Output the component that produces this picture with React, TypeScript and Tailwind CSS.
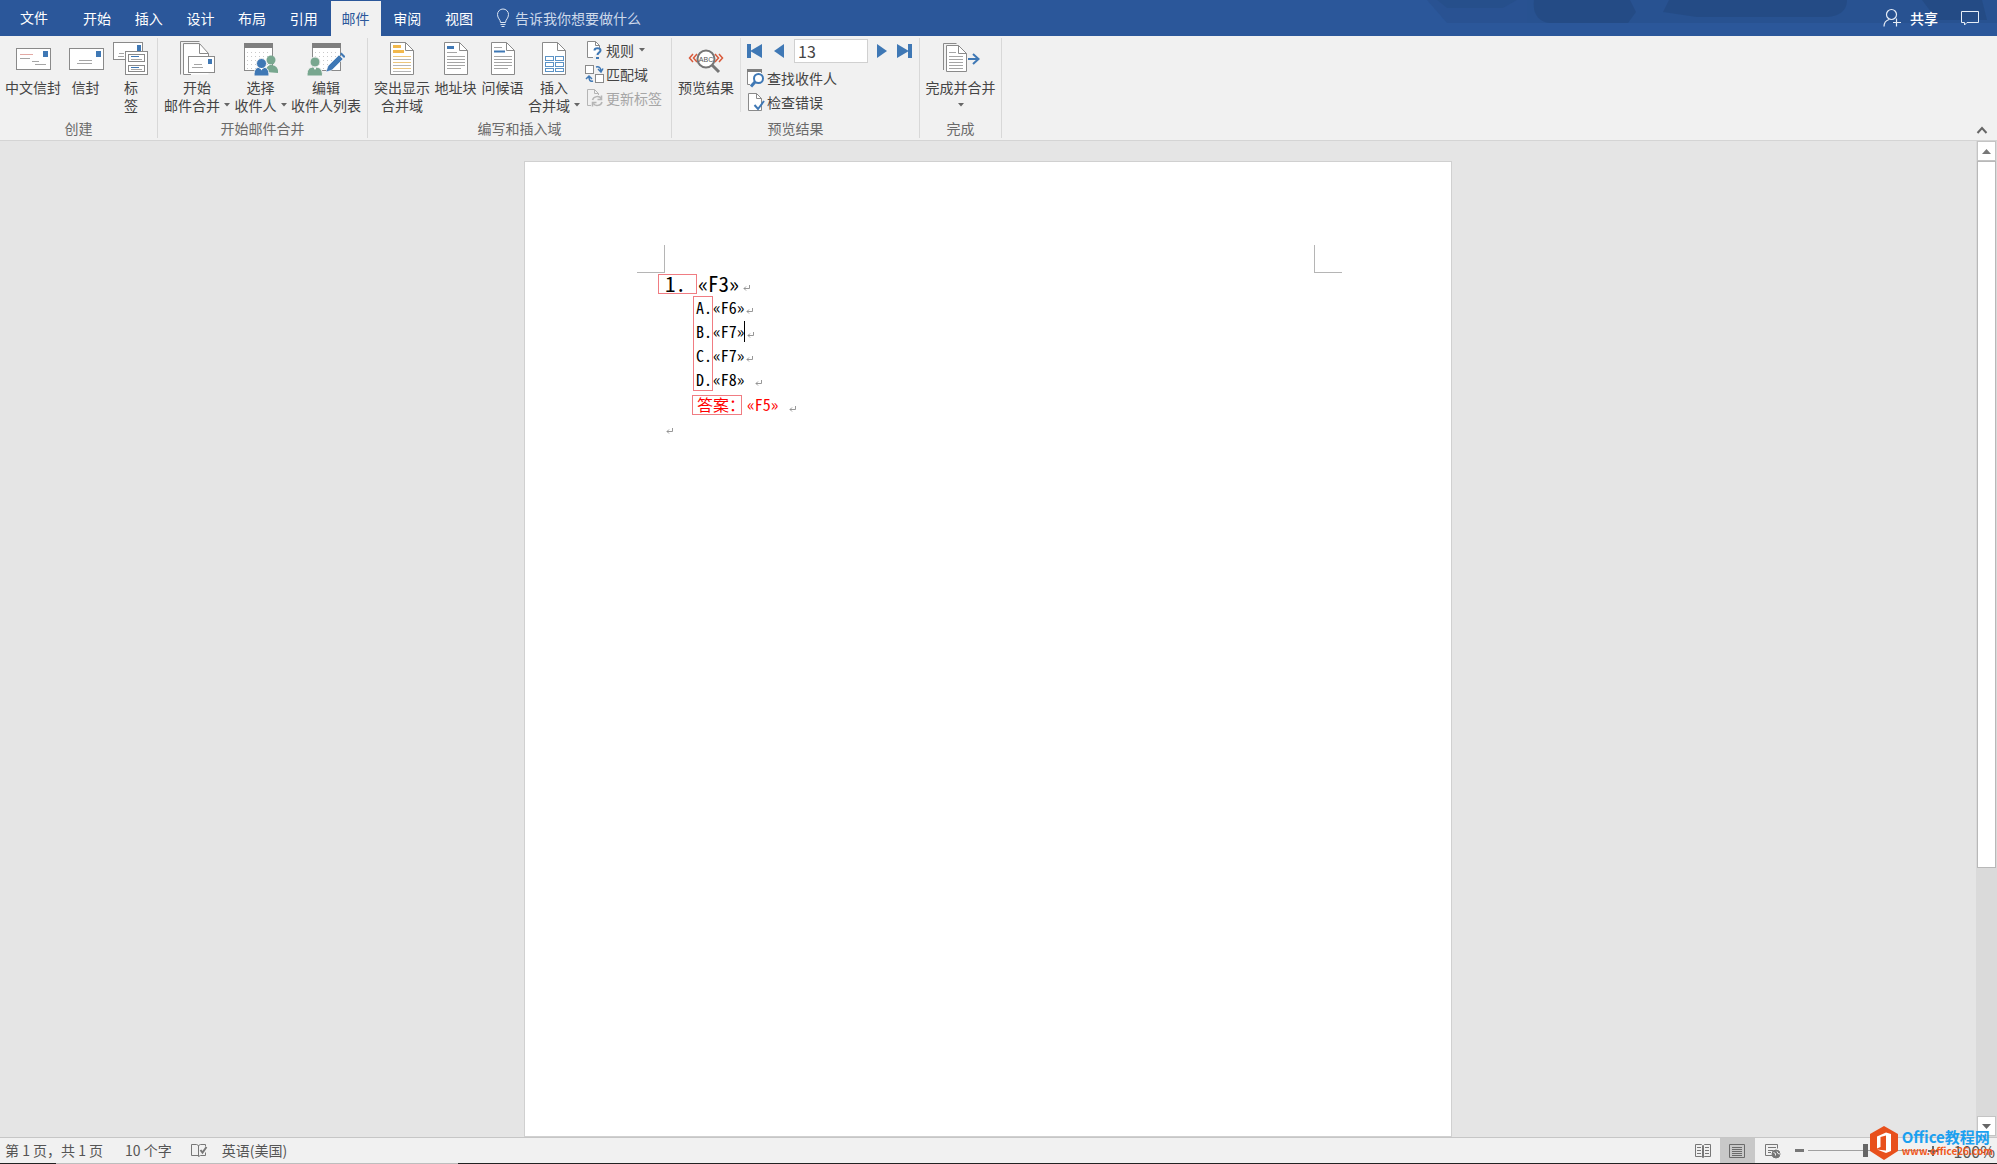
import React from 'react';

type IconProps = { className?: string };

const GRAY = '#8a8a8a';
const BLUE = '#3f78b5';

function EnvelopeCnIcon() {
  return (
    <svg width="36" height="34" viewBox="0 0 36 34" fill="none">
      <rect x="1.5" y="7.5" width="34" height="21" fill="#fff" stroke={GRAY} />
      <rect x="28" y="10" width="5" height="6" fill={BLUE} />
      <path d="M5 13.5h13" stroke="#e3a9a4" />
      <path d="M5 17.5h10M17 20.5h7M20 23.5h11" stroke="#a5a5a5" />
    </svg>
  );
}

function EnvelopeIcon() {
  return (
    <svg width="36" height="34" viewBox="0 0 36 34" fill="none">
      <rect x="1.5" y="7.5" width="34" height="21" fill="#fff" stroke={GRAY} />
      <rect x="28" y="10" width="5" height="6" fill={BLUE} />
      <path d="M11 19.5h13M9 22.5h15" stroke="#a5a5a5" />
    </svg>
  );
}

function LabelsIcon() {
  return (
    <svg width="36" height="34" viewBox="0 0 36 34" fill="none">
      <rect x="0.5" y="1.5" width="29" height="17" fill="#fff" stroke={GRAY} />
      <rect x="24" y="4" width="4" height="6" fill={BLUE} />
      <path d="M6 12.5h5M5 15.5h6" stroke="#a5a5a5" />
      <rect x="12.5" y="10.5" width="22" height="23" fill="#fff" stroke={GRAY} />
      <rect x="15.5" y="13.5" width="16" height="7" stroke={GRAY} />
      <rect x="15.5" y="24.5" width="16" height="6" stroke={GRAY} />
      <path d="M18 15.5h8M18 26.5h8" stroke={BLUE} />
      <path d="M18 18.5h11M18 28.5h11" stroke="#a5a5a5" />
    </svg>
  );
}

function StartMergeIcon() {
  return (
    <svg width="36" height="36" viewBox="0 0 36 36" fill="none">
      <path d="M1.5 34.5v-33h19" stroke={GRAY} />
      <path d="M4.5 34.5v-30h17l8 9v21z" fill="#fff" />
      <path d="M12 34.5H4.5v-31h16l9 10v3M20.5 4v9.5h9" stroke={GRAY} />
      <rect x="9.5" y="16.5" width="26" height="16" fill="#fff" stroke={GRAY} />
      <rect x="29" y="19" width="4" height="5" fill={BLUE} />
      <path d="M15 24.5h8M13 27.5h11" stroke="#a5a5a5" />
    </svg>
  );
}

function Calendar() {
  return (
    <>
      <rect x="1.5" y="3.5" width="28" height="27" fill="#fff" stroke={GRAY} />
      <rect x="1" y="3" width="29" height="5" fill="#7f7f7f" />
      <path
        d="M4 12.5h24M4 16.5h24M4 20.5h24M4 24.5h24M4 28.5h12"
        stroke="#c9c9c9"
        strokeDasharray="1 3"
      />
    </>
  );
}

function SelectRecipientsIcon() {
  return (
    <svg width="36" height="36" viewBox="0 0 36 36" fill="none">
      <Calendar />
      <circle cx="28" cy="20" r="4.5" fill="#78a78f" />
      <path d="M23 32c0-5 2-7 5-7s7 2 7 6v2z" fill="#78a78f" />
      <path d="M11 36c0-7 2-9 7.500-9s7.500 2 7.500 9z" fill={BLUE} stroke="#f1f1f1" />
      <circle cx="18.5" cy="23.5" r="5" fill={BLUE} stroke="#f1f1f1" />
      <path d="M17 28l1.5 2.5L20 28z" fill="#fff" />
    </svg>
  );
}

function EditRecipientsIcon() {
  return (
    <svg width="38" height="36" viewBox="0 0 38 36" fill="none">
      <g transform="translate(4 0)">
        <Calendar />
      </g>
      <path d="M0 36c0-7 2-9 7.500-9s8 2 8 9z" fill="#78a78f" stroke="#f1f1f1" />
      <circle cx="8" cy="22" r="5" fill="#78a78f" stroke="#f1f1f1" />
      <path d="M6.500 27.500L8 30l1.500-2.500z" fill="#fff" />
      <path d="M19 32l2-6 11-11 4 4-11 11z" fill={BLUE} stroke="#fff" strokeWidth="0.5" />
      <path d="M33 14l1.500-1.500 4 4L37 18z" fill={BLUE} />
    </svg>
  );
}

function Sheet({ children }: { children: React.ReactNode }) {
  return (
    <svg width="26" height="34" viewBox="0 0 26 34" fill="none">
      <path d="M1.5 1.5h15l8 8v24h-23z" fill="#fff" stroke={GRAY} />
      <path d="M16.5 1.5v8h8" stroke={GRAY} />
      {children}
    </svg>
  );
}

function HighlightIcon() {
  return (
    <Sheet>
      <path d="M4 5.5h8M4 10.5h11" stroke="#f2b84b" strokeWidth="3" />
      <path d="M4 15.5h18M4 21.5h18M4 27.5h18" stroke="#ecc67c" />
      <path d="M4 18.5h18M4 24.5h18M4 30.5h18" stroke="#b5b5b5" />
    </Sheet>
  );
}

function AddressIcon() {
  return (
    <Sheet>
      <path d="M4 6.5h7" stroke={BLUE} strokeWidth="3" />
      <path d="M4 11.5h10M4 15.5h18M4 18.5h18M4 21.5h18M4 24.5h18M4 27.5h14" stroke="#a5a5a5" />
    </Sheet>
  );
}

function GreetingIcon() {
  return (
    <Sheet>
      <path d="M4 10.5h11" stroke={BLUE} strokeWidth="2" />
      <path d="M4 6.5h8M4 15.5h18M4 18.5h18M4 21.5h18M4 24.5h18M4 27.5h14" stroke="#a5a5a5" />
    </Sheet>
  );
}

function InsertFieldIcon() {
  return (
    <Sheet>
      <g stroke="#5b93c6">
        <rect x="4.5" y="15.5" width="8" height="4" />
        <rect x="14.5" y="15.5" width="8" height="4" />
        <rect x="4.5" y="21.5" width="8" height="4" />
        <rect x="14.5" y="21.5" width="8" height="4" />
        <rect x="4.5" y="27.5" width="8" height="3" />
        <rect x="14.5" y="27.5" width="8" height="3" />
      </g>
    </Sheet>
  );
}

function RulesIcon() {
  return (
    <svg width="18" height="20" viewBox="0 0 18 20" fill="none">
      <path d="M8 17.5H2.5v-16h8l4 4V9" fill="#fff" stroke={GRAY} />
      <path d="M10.5 1.5v4h4" stroke={GRAY} />
      <path d="M9.5 10.5c0-3 6-3 6 0 0 2-3 2-3 4.5" stroke={BLUE} strokeWidth="2" />
      <rect x="11" y="17" width="3" height="2" fill={BLUE} />
    </svg>
  );
}

function MatchIcon() {
  return (
    <svg width="20" height="20" viewBox="0 0 20 20" fill="none">
      <rect x="0.5" y="1.5" width="8" height="8" fill="#fff" stroke={GRAY} />
      <rect x="10.5" y="10.5" width="8" height="8" fill="#fff" stroke={GRAY} />
      <path d="M11 3c3-1 5 1 5 4M13 5l3 3 2-3.5" stroke={BLUE} strokeWidth="1.5" />
      <path d="M8 17c-3 1-4-1-4-4M1 15l3-3 3 3" stroke={BLUE} strokeWidth="1.5" />
    </svg>
  );
}

function UpdateLabelsIcon() {
  return (
    <svg width="18" height="20" viewBox="0 0 18 20" fill="none" stroke="#b5b5b5">
      <path d="M6 17.5H2.5v-16h7l4 4V7M9.5 1.5v4h4" />
      <path
        d="M7.5 12c1-4 7-4.5 8.5-1.5M16.5 7.5v4h-4M17 14c-1 4-7 4.5-8.5 1.5M7.5 18.5v-4h4"
        strokeWidth="1.5"
      />
    </svg>
  );
}

function PreviewIcon() {
  return (
    <svg width="36" height="34" viewBox="0 0 36 34" fill="none">
      <path
        d="M5 13l-3.500 4L5 21M9 13l-3.500 4L9 21M27 13l3.500 4-3.500 4M31 13l3.500 4-3.500 4"
        stroke="#d9593a"
        strokeWidth="1.5"
      />
      <path d="M24 24l7 7" stroke="#767676" strokeWidth="3" />
      <circle cx="18" cy="18" r="8.5" fill="#fff" stroke="#767676" strokeWidth="2" />
      <text x="18" y="21" fontSize="7" textAnchor="middle" fill="#555" className="font-['Liberation_Sans',sans-serif]">
        ABC
      </text>
    </svg>
  );
}

function FindIcon() {
  return (
    <svg width="20" height="20" viewBox="0 0 20 20" fill="none">
      <path d="M4 16.5H1.5v-14h14V5" fill="#fff" stroke={GRAY} />
      <path d="M1 2.5h15" stroke="#7f7f7f" strokeWidth="3" />
      <circle cx="12.5" cy="10.5" r="4.5" fill="#fff" stroke={BLUE} strokeWidth="2" />
      <path d="M9 14l-4 4.5" stroke={BLUE} strokeWidth="3" />
    </svg>
  );
}

function CheckErrorIcon() {
  return (
    <svg width="20" height="20" viewBox="0 0 20 20" fill="none">
      <path d="M2.5 1.5h8l5 5v12h-13z" fill="#fff" stroke={GRAY} />
      <path d="M10.5 1.5v5h5" stroke={GRAY} />
      <path d="M8.5 13l3.5 4 6-8" stroke={BLUE} strokeWidth="2" />
    </svg>
  );
}

function FinishIcon() {
  return (
    <svg width="38" height="34" viewBox="0 0 38 34" fill="none">
      <path d="M1.5 29V2.500h13" stroke={GRAY} />
      <path d="M4.5 4.5h12l8 8v18h-20z" fill="#fff" stroke={GRAY} />
      <path d="M16.5 4.5v8h8" stroke={GRAY} />
      <path d="M7 11.5h7M7 15.5h14M7 18.5h14M7 21.5h14M7 24.5h14M7 27.5h14" stroke="#a5a5a5" />
      <path d="M26 18h10M31 13l5.500 5-5.500 5" stroke={BLUE} strokeWidth="2" />
    </svg>
  );
}

function BulbIcon() {
  return (
    <svg width="14" height="20" viewBox="0 0 14 20" fill="none" stroke="#dbe5f3">
      <path d="M4.5 14.5c0-3-3-4-3-8a5.500 5.500 0 0 1 11 0c0 4-3 5-3 8zM4.5 16.5h5M5.5 18.5h3" />
    </svg>
  );
}

function ShareIcon() {
  return (
    <svg width="20" height="20" viewBox="0 0 20 20" fill="none" stroke="#e6edf7" strokeWidth="1.2">
      <circle cx="9.5" cy="6.5" r="5" />
      <path d="M2 18.5c0-4 2-6 5-7M11 14.5h8M14.5 10.5v8" />
    </svg>
  );
}

function CommentIcon() {
  return (
    <svg width="20" height="18" viewBox="0 0 20 18" fill="none" stroke="#e6edf7">
      <path d="M1.5 2.5h17v11H7L4.5 16v-2.500h-3z" />
    </svg>
  );
}

function Caret({ className = '' }: IconProps) {
  return (
    <svg width="6" height="4" viewBox="0 0 6 4" className={className}>
      <path d="M0 0h6L3 3.500z" fill="#666" />
    </svg>
  );
}

function ReturnMark({ className = '' }: IconProps) {
  return (
    <svg width="7" height="7" viewBox="0 0 7 7" fill="none" stroke="#8c8c8c" className={className}>
      <path d="M6.500 1v3.500H1M3 2.500L1 4.500l2 2" strokeWidth="0.9" />
    </svg>
  );
}

function OfficeLogo() {
  return (
    <svg width="28" height="34" viewBox="0 0 28 34">
      <path d="M14 0l14 8v17l-14 9-14-9V8z" fill="#e8501c" />
      <path d="M7 10.500l9-4 5 1.500v17L16 27l-9-3.500 9 1V9.500l-5.500 1.500v10L7 22.500z" fill="#fff" />
    </svg>
  );
}

const tabs = ['开始', '插入', '设计', '布局', '引用', '邮件', '审阅', '视图'];

function TitleBar() {
  return (
    <header className="relative flex h-9 items-stretch bg-[#2b579a] text-sm text-white">
      <svg
        className="absolute right-0 top-0 h-[23px] w-[640px]"
        viewBox="0 0 640 23"
        preserveAspectRatio="none"
        fill="#234a82"
      >
        <path d="M70 0h100v23H90z" opacity="0.3" />
        <path d="M80 0h80l-14 8H90z" opacity="0.4" />
        <path d="M170 0h470v23H170z" opacity="0.35" />
        <path d="M177 0h96l6 12-8 11h-76c-12 0-20-8-18-23z" opacity="0.8" />
        <path d="M312 0h178c0 12-10 17-22 17H340l-34-5z" opacity="0.8" />
        <path d="M565 0h60l5 20h-50z" opacity="0.8" />
      </svg>
      <button className="w-[68px] shrink-0 pb-0.5">文件</button>
      <nav className="ml-1 flex w-[412px] justify-between pt-px">
        {tabs.map((tab) => (
          <button
            key={tab}
            className={tab === '邮件' ? 'w-[50px] bg-[#f1f1f1] pb-0.5 text-[#2b579a]' : 'w-[50px] pb-0.5'}
          >
            {tab}
          </button>
        ))}
      </nav>
      <button className="ml-3 flex items-center gap-[5px] text-[#cdd9ea]">
        <BulbIcon />
        <span>告诉我你想要做什么</span>
      </button>
      <div className="relative ml-auto flex items-center pr-[17px]">
        <button className="flex items-center gap-2 font-medium">
          <ShareIcon />
          共享
        </button>
        <button className="ml-[22px]" aria-label="批注">
          <CommentIcon />
        </button>
      </div>
    </header>
  );
}

type BigButtonProps = {
  icon: React.ReactNode;
  lines: string[];
  width: string;
  caret?: boolean;
};

function BigButton({ icon, lines, width, caret }: BigButtonProps) {
  return (
    <button className={`flex shrink-0 flex-col items-center ${width}`}>
      <span className="flex h-10 items-center">{icon}</span>
      {lines.map((line, i) => (
        <span key={line} className="flex h-[18px] items-center gap-1 whitespace-nowrap leading-[18px]">
          {line}
          {caret && i === lines.length - 1 && i > 0 && <Caret />}
        </span>
      ))}
      {caret && lines.length === 1 && (
        <span className="flex h-[18px] items-center">
          <Caret />
        </span>
      )}
    </button>
  );
}

type SmallButtonProps = {
  icon: React.ReactNode;
  label: string;
  caret?: boolean;
  disabled?: boolean;
};

function SmallButton({ icon, label, caret, disabled }: SmallButtonProps) {
  return (
    <button
      disabled={disabled}
      className="flex h-6 items-center whitespace-nowrap disabled:text-[#a6a6a6]"
    >
      <span className="flex w-[21px]">{icon}</span>
      {label}
      {caret && <Caret className="ml-[5px]" />}
    </button>
  );
}

function Group({ label, width, children }: { label: string; width: string; children: React.ReactNode }) {
  return (
    <section className={`flex shrink-0 flex-col border-r border-[#d8d8d8] ${width}`}>
      <div className="flex h-20">{children}</div>
      <div className="text-center leading-5 text-[#6a6a6a]">{label}</div>
    </section>
  );
}

function NavButton({ label, d }: { label: string; d: string }) {
  return (
    <button aria-label={label} className="shrink-0">
      <svg width="16" height="16" viewBox="0 0 16 16">
        <path d={d} fill={BLUE} />
      </svg>
    </button>
  );
}

function Ribbon() {
  return (
    <div className="flex h-[105px] items-start border-b border-[#d4d4d4] bg-[#f1f1f1] pt-0.5 text-sm text-[#444]">
      <Group label="创建" width="w-[158px] px-1">
        <BigButton icon={<EnvelopeCnIcon />} lines={['中文信封']} width="w-[58px]" />
        <BigButton icon={<EnvelopeIcon />} lines={['信封']} width="w-[47px]" />
        <BigButton icon={<LabelsIcon />} lines={['标', '签']} width="w-[44px]" />
      </Group>
      <Group label="开始邮件合并" width="w-[210px] px-1">
        <BigButton icon={<StartMergeIcon />} lines={['开始', '邮件合并']} width="w-[70px]" caret />
        <BigButton icon={<SelectRecipientsIcon />} lines={['选择', '收件人']} width="w-[57px]" caret />
        <BigButton icon={<EditRecipientsIcon />} lines={['编辑', '收件人列表']} width="w-[74px]" />
      </Group>
      <Group label="编写和插入域" width="w-[304px] px-1">
        <BigButton icon={<HighlightIcon />} lines={['突出显示', '合并域']} width="w-[60px]" />
        <BigButton icon={<AddressIcon />} lines={['地址块']} width="w-[47px]" />
        <BigButton icon={<GreetingIcon />} lines={['问候语']} width="w-[47px]" />
        <BigButton icon={<InsertFieldIcon />} lines={['插入', '合并域']} width="w-[56px]" caret />
        <div className="ml-[3px] flex flex-col">
          <SmallButton icon={<RulesIcon />} label="规则" caret />
          <SmallButton icon={<MatchIcon />} label="匹配域" />
          <SmallButton icon={<UpdateLabelsIcon />} label="更新标签" disabled />
        </div>
      </Group>
      <Group label="预览结果" width="w-[248px]">
        <div className="flex h-[74px] w-[69px] shrink-0 justify-center border-r border-[#dedede]">
          <BigButton icon={<PreviewIcon />} lines={['预览结果']} width="w-[64px]" />
        </div>
        <div className="flex flex-col pl-[5px] pt-px">
          <div className="mb-[3px] flex items-center">
            <NavButton label="首记录" d="M1 1h4v6.500L16 1v14L5 8.500V15H1z" />
            <span className="ml-2 flex">
              <NavButton label="上一记录" d="M14 1v14L4 8z" />
            </span>
            <input
              aria-label="记录"
              defaultValue="13"
              className="ml-2 h-6 w-[74px] border border-[#d0d0d0] bg-white px-[3px] text-base leading-5 outline-none"
            />
            <span className="ml-[5px] flex">
              <NavButton label="下一记录" d="M4 1v14l10-7z" />
            </span>
            <span className="ml-2 flex">
              <NavButton label="尾记录" d="M0 1v14l11-6.500V15h4V1h-4v6.500z" />
            </span>
          </div>
          <SmallButton icon={<FindIcon />} label="查找收件人" />
          <SmallButton icon={<CheckErrorIcon />} label="检查错误" />
        </div>
      </Group>
      <Group label="完成" width="w-[82px]">
        <BigButton icon={<FinishIcon />} lines={['完成并合并']} width="w-[81px]" caret />
      </Group>
      <button aria-label="折叠功能区" className="mb-1 ml-auto mr-2 self-end p-px">
        <svg width="12" height="10" viewBox="0 0 12 10" fill="none">
          <path d="M1.5 8L6 3l4.500 5" stroke="#666" strokeWidth="2" />
        </svg>
      </button>
    </div>
  );
}

const options = [
  { letter: 'A.', field: '«F6»' },
  { letter: 'B.', field: '«F7»' },
  { letter: 'C.', field: '«F7»' },
  { letter: 'D.', field: '«F8»' },
];

function DocumentPage() {
  return (
    <article className="w-[928px] shrink-0 border border-[#d0d0d0] bg-white font-['Noto_Sans_Mono_CJK_SC','Noto_Sans_CJK_SC',sans-serif] text-base text-black">
      {/* Margin crop marks */}
      <div className="mt-[83px] flex justify-between pl-28 pr-[109px]">
        <div className="h-7 w-7 border-b border-r border-[#b5b5b5]" />
        <div className="h-7 w-7 border-b border-l border-[#b5b5b5]" />
      </div>

      <div className="flex h-[22px] items-center pl-[133px] text-[21px]">
        <span className="h-5 w-[39px] border border-[#f07c82] pl-1.5 leading-4">1.</span>
        <span className="ml-px pb-0.5 leading-5">«F3»</span>
        <ReturnMark className="ml-1 mt-1.5" />
      </div>

      <div className="mt-px flex pl-[168px]">
        <div className="flex h-[95px] w-5 flex-col justify-between border border-[#f07c82] pl-0.5">
          {options.map(({ letter }) => (
            <div key={letter} className="h-[21px] leading-[21px]">
              {letter}
            </div>
          ))}
        </div>
        <div className="flex h-[95px] flex-col justify-between py-px">
          {options.map(({ letter, field }) => (
            <div key={letter} className="flex h-[21px] items-center leading-[21px]">
              {field}
              {letter === 'B.' && <span className="h-[21px] w-px bg-black" />}
              <ReturnMark className={letter === 'D.' ? 'ml-[11px] mt-1.5' : 'ml-0.5 mt-1.5'} />
            </div>
          ))}
        </div>
      </div>

      <div className="mt-1 flex items-center pl-[167px] text-[#f00]">
        <span className="h-5 w-[50px] whitespace-nowrap border border-[#f07c82] pl-1 leading-4">答案：</span>
        <span className="ml-[5px] pb-0.5 leading-[18px]">«F5»</span>
        <ReturnMark className="ml-[11px] mt-1.5" />
      </div>

      <ReturnMark className="ml-[141px] mt-3" />
    </article>
  );
}

function ScrollBar() {
  return (
    <div className="flex w-[21px] shrink-0 flex-col bg-[#dadada] px-px pb-px">
      <button aria-label="向上滚动" className="flex h-5 items-center justify-center border border-[#c4c4c4] bg-white">
        <svg width="9" height="5" viewBox="0 0 9 5">
          <path d="M0 5l4.500-5L9 5z" fill="#777" />
        </svg>
      </button>
      <div className="flex min-h-0 flex-1 flex-col">
        <div className="basis-[74%] border border-[#b8b8b8] bg-white" />
      </div>
      <button aria-label="向下滚动" className="flex h-5 items-center justify-center border border-[#c4c4c4] bg-white">
        <svg width="9" height="5" viewBox="0 0 9 5">
          <path d="M0 0l4.500 5L9 0z" fill="#666" />
        </svg>
      </button>
    </div>
  );
}

function StatusBar() {
  return (
    <footer className="relative flex h-[26px] shrink-0 items-stretch border-t border-[#c6c6c6] bg-[#f1f1f1] text-sm text-[#555]">
      <div className="flex items-center pb-0.5 pl-[5px]">
        <span>第 1 页，共 1 页</span>
        <span className="ml-[22px]">10 个字</span>
        <button aria-label="校对" className="ml-[18px]">
          <svg width="18" height="16" viewBox="0 0 18 16" fill="none" stroke="#777">
            <path d="M8.5 13.5h-7v-11h5l2 1v11l2-1h5v-3M8.5 3.5l2-1h5v2" />
            <path d="M10.5 8l2 2.500L16.5 5" strokeWidth="2" />
          </svg>
        </button>
        <span className="ml-[14px]">英语(美国)</span>
      </div>

      <div className="ml-auto flex items-center">
        <button aria-label="阅读视图" className="flex w-[34px] justify-center">
          <svg width="16" height="16" viewBox="0 0 16 16" fill="none" stroke="#777">
            <path d="M7.5 14.5v-12l-1-1h-6v12h6zM8.5 14.5v-12l1-1h6v12h-6z" />
            <path d="M2 4.5h4M2 7.5h4M2 10.5h4M10 4.5h4M10 7.5h4M10 10.5h4" />
          </svg>
        </button>
        <button aria-label="页面视图" className="flex h-full w-[35px] items-center justify-center bg-[#c8c8c8]">
          <svg width="16" height="16" viewBox="0 0 16 16" fill="none" stroke="#6a6a6a">
            <path d="M0.5 1.5h15v13H0.5zM3 4.5h10M3 6.5h10M3 8.5h10M3 10.5h10M3 12.5h10" />
          </svg>
        </button>
        <button aria-label="Web 版式视图" className="flex w-[36px] justify-center">
          <svg width="18" height="16" viewBox="0 0 18 16" fill="none" stroke="#777">
            <path d="M8 12.5H1.5v-11h12v4M4 4.5h8M4 7.5h5M4 9.5h3" />
            <circle cx="12" cy="11" r="4" fill="#777" />
            <path d="M9.5 9.5l2 1v2M13 8.5l1 2 2 .5" stroke="#eee" />
          </svg>
        </button>
        <button aria-label="缩小" className="ml-1 h-[3px] w-[9px] bg-[#777]" />
        <input
          type="range"
          aria-label="显示比例"
          defaultValue={50}
          className="ml-1 h-4 w-[116px] appearance-none bg-[linear-gradient(#a0a0a0,#a0a0a0)] bg-[length:100%_1px] bg-center bg-no-repeat [&::-webkit-slider-thumb]:h-[13px] [&::-webkit-slider-thumb]:w-[5px] [&::-webkit-slider-thumb]:appearance-none [&::-webkit-slider-thumb]:bg-[#666]"
        />
        <button aria-label="放大" className="ml-1">
          <svg width="10" height="10" viewBox="0 0 10 10">
            <path d="M5 0v10M0 5h10" stroke="#666" strokeWidth="2" />
          </svg>
        </button>
        <span className="ml-4 pr-0.5 text-base">100%</span>
      </div>

      {/* Site watermark over the zoom controls */}
      <a href="#" className="absolute bottom-[3px] right-1 flex items-center gap-1 font-bold">
        <OfficeLogo />
        <span className="flex flex-col whitespace-nowrap">
          <span className="text-[15px] leading-4 text-[#1ba0f0]">Office教程网</span>
          <span className="text-[10px] leading-3 text-[#f0591e]">www.office26.com</span>
        </span>
      </a>
    </footer>
  );
}

export default function App() {
  return (
    <div className="flex h-screen flex-col overflow-hidden bg-[#e5e5e5] font-['Noto_Sans_CJK_SC',sans-serif]">
      <TitleBar />
      <Ribbon />
      <main className="flex min-h-0 flex-1">
        <div className="flex min-w-0 flex-1 justify-center overflow-hidden pt-5">
          <DocumentPage />
        </div>
        <ScrollBar />
      </main>
      <StatusBar />
      <div className="flex h-px shrink-0 bg-[#222]">
        <div className="ml-[56px] w-[402px] bg-[#bdbdbd]" />
      </div>
    </div>
  );
}
